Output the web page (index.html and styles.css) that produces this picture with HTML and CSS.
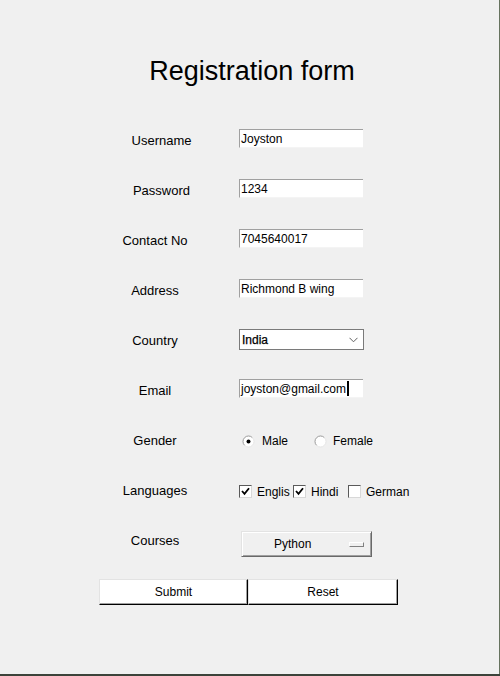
FILE: index.html
```html
<!DOCTYPE html>
<html lang="en">
<head>
<meta charset="utf-8">
<title>Registration form</title>
<link rel="stylesheet" href="styles.css">
</head>
<body>
<div class="window">
  <h1 class="title">Registration form</h1>
  <div class="form">
    <div class="label label--right">Username</div>
    <div class="entry">Joyston</div>

    <div class="label label--right">Password</div>
    <div class="entry">1234</div>

    <div class="label">Contact No</div>
    <div class="entry">7045640017</div>

    <div class="label">Address</div>
    <div class="entry">Richmond B wing</div>

    <div class="label">Country</div>
    <div class="combo">
      <span class="combo-text">India</span>
      <svg class="chevron" width="9" height="6" viewBox="0 0 9 6"><path d="M0.5 0.8 L4.5 4.8 L8.5 0.8" fill="none" stroke="#606060" stroke-width="1"/></svg>
    </div>

    <div class="label">Email</div>
    <div class="entry">joyston@gmail.com<span class="caret"></span></div>

    <div class="label">Gender</div>
    <div class="choices">
      <div class="radio radio--male">
        <svg class="radio-mark" width="13" height="13" viewBox="0 0 13 13">
          <circle cx="6.5" cy="6.5" r="5.5" fill="#fff"/>
          <path d="M2.61 10.39 A5.5 5.5 0 0 1 10.39 2.61" fill="none" stroke="#9a9a9a" stroke-width="1"/>
          <path d="M10.39 2.61 A5.5 5.5 0 0 1 2.61 10.39" fill="none" stroke="#e6e6e6" stroke-width="1"/>
          <circle cx="6.5" cy="6.5" r="2" fill="#000"/>
        </svg>
        <span>Male</span>
      </div>
      <div class="radio radio--female">
        <svg class="radio-mark" width="13" height="13" viewBox="0 0 13 13">
          <circle cx="6.5" cy="6.5" r="5.5" fill="#fff"/>
          <path d="M2.61 10.39 A5.5 5.5 0 0 1 10.39 2.61" fill="none" stroke="#9a9a9a" stroke-width="1"/>
          <path d="M10.39 2.61 A5.5 5.5 0 0 1 2.61 10.39" fill="none" stroke="#e6e6e6" stroke-width="1"/>
        </svg>
        <span>Female</span>
      </div>
    </div>

    <div class="label">Languages</div>
    <div class="choices checks">
      <div class="check check--english">
        <span class="box"><svg width="9" height="9" viewBox="0 0 9 9"><path d="M1 4 L3.5 6.8 L8 1.2" fill="none" stroke="#000" stroke-width="1.8"/></svg></span>
        <span class="check-text">English</span>
      </div>
      <div class="check check--hindi">
        <span class="box"><svg width="9" height="9" viewBox="0 0 9 9"><path d="M1 4 L3.5 6.8 L8 1.2" fill="none" stroke="#000" stroke-width="1.8"/></svg></span>
        <span class="check-text">Hindi</span>
      </div>
      <div class="check">
        <span class="box"></span>
        <span class="check-text">German</span>
      </div>
    </div>

    <div class="label">Courses</div>
    <div class="option-btn">
      <span>Python</span>
      <span class="indicator"></span>
    </div>

    <div class="buttons">
      <button class="btn btn--submit">Submit</button>
      <button class="btn">Reset</button>
    </div>
  </div>
</div>
</body>
</html>
```

FILE: styles.css
```css
html {
  background: #3c433a;
}

body {
  margin: 0;
  width: 500px;
  height: 676px;
  overflow: hidden;
  font-family: "Liberation Sans", Arial, sans-serif;
  color: #000;
}

.window {
  box-sizing: border-box;
  width: 500px;
  height: 674px;
  background: #f0f0f0;
  border-right: 1px solid #66735f;
  padding-top: 55px;
}

.title {
  margin: 0;
  font-weight: normal;
  font-size: 27px;
  line-height: 32px;
  text-align: center;
  padding-left: 5px;
}

.form {
  display: grid;
  grid-template-columns: 110px 262px;
  grid-auto-rows: 50px;
  column-gap: 29px;
  margin-left: 100px;
  margin-top: 42px;
  align-items: start;
}

.label {
  font-size: 13px;
  line-height: 23px;
  text-align: center;
}

.label--right {
  padding-left: 13px;
}

.entry {
  box-sizing: border-box;
  width: 124px;
  height: 19px;
  background: #fff;
  border-style: solid;
  border-width: 1px 0 1px 1px;
  border-color: #a0a0a0 transparent #f4f4f4 #a0a0a0;
  padding: 1px 0 0 1px;
  font-size: 12px;
  line-height: 17px;
  white-space: nowrap;
  overflow: hidden;
}

.caret {
  display: inline-block;
  width: 2px;
  height: 15px;
  background: #000;
  vertical-align: -3px;
  margin-left: 1px;
}

.combo {
  box-sizing: border-box;
  width: 125px;
  height: 21px;
  background: #fff;
  border: 1px solid #7a7a7a;
  display: flex;
  align-items: center;
  padding: 0 5px 0 2px;
  font-size: 12px;
}

.combo-text {
  flex: 1;
  -webkit-text-stroke: 0.25px #000;
}

.choices {
  display: flex;
  align-items: center;
  height: 24px;
  font-size: 12px;
}

.radio {
  display: flex;
  align-items: center;
}

.radio-mark {
  display: block;
}

.radio--male {
  margin-left: 3px;
  gap: 7px;
}

.radio--female {
  margin-left: 26px;
  gap: 6px;
}

.checks {
  height: 25px;
}

.check {
  display: flex;
  align-items: center;
  gap: 5px;
  white-space: nowrap;
  flex: none;
}

.check--english {
  width: 51px;
  overflow: hidden;
  margin-right: 3px;
}

.check--hindi {
  width: 53px;
  margin-right: 2px;
}

.box {
  box-sizing: border-box;
  width: 13px;
  height: 13px;
  flex: none;
  background: #fff;
  border: 1px solid;
  border-color: #5a5a5a #d8d8d8 #d8d8d8 #5a5a5a;
  display: flex;
  align-items: center;
  justify-content: center;
}

.box svg {
  display: block;
}

.option-btn {
  box-sizing: border-box;
  width: 131px;
  height: 26px;
  margin-top: 2px;
  margin-left: 2px;
  background: #f0f0f0;
  border: 1px solid;
  border-color: #e3e3e3 #696969 #696969 #e3e3e3;
  box-shadow: inset 1px 1px 0 #fff, inset -1px -1px 0 #a0a0a0;
  display: flex;
  align-items: center;
  padding-left: 32px;
  font-size: 12px;
}

.indicator {
  box-sizing: border-box;
  width: 15px;
  height: 5px;
  margin-left: auto;
  margin-right: 7px;
  background: #f0f0f0;
  border: 1px solid;
  border-color: #fff #808080 #808080 #fff;
}

.buttons {
  grid-column: 1 / -1;
  display: flex;
  margin-left: -1px;
}

.btn {
  box-sizing: border-box;
  height: 26px;
  width: 149px;
  margin: 0;
  padding: 0;
  background: #fff;
  border: 1px solid;
  border-color: #e3e3e3 #000 #000 #e3e3e3;
  box-shadow: inset -1px -1px 0 #a0a0a0;
  font-family: "Liberation Sans", Arial, sans-serif;
  font-size: 12px;
  color: #000;
}

.btn + .btn {
  width: 150px;
}
```
